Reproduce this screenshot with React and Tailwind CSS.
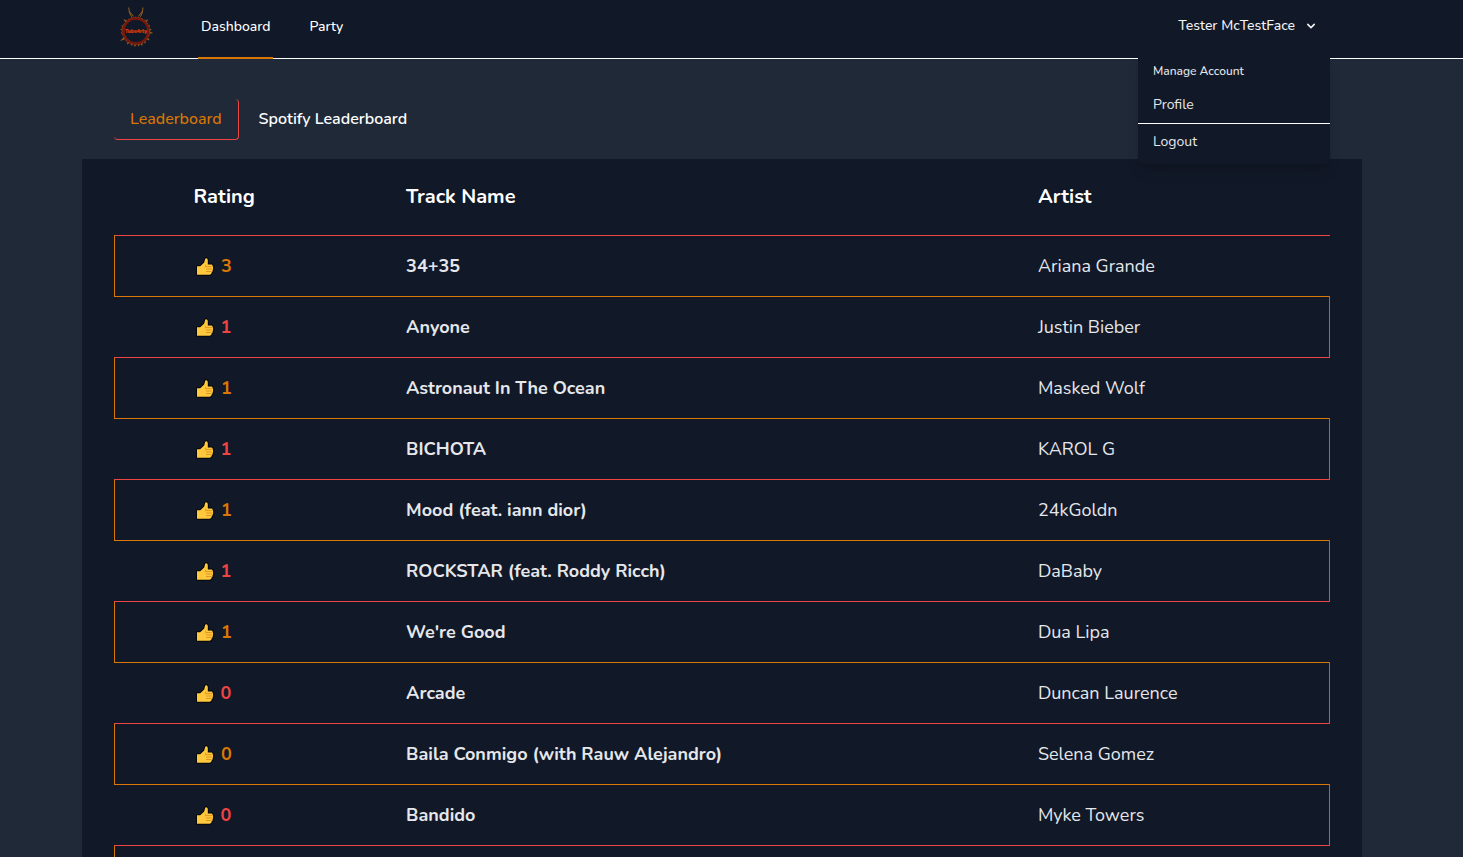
import React, { useState } from "react";

const tracks = [
  { rating: 3, name: "34+35", artist: "Ariana Grande" },
  { rating: 1, name: "Anyone", artist: "Justin Bieber" },
  { rating: 1, name: "Astronaut In The Ocean", artist: "Masked Wolf" },
  { rating: 1, name: "BICHOTA", artist: "KAROL G" },
  { rating: 1, name: "Mood (feat. iann dior)", artist: "24kGoldn" },
  { rating: 1, name: "ROCKSTAR (feat. Roddy Ricch)", artist: "DaBaby" },
  { rating: 1, name: "We're Good", artist: "Dua Lipa" },
  { rating: 0, name: "Arcade", artist: "Duncan Laurence" },
  { rating: 0, name: "Baila Conmigo (with Rauw Alejandro)", artist: "Selena Gomez" },
  { rating: 0, name: "Bandido", artist: "Myke Towers" },
];

// Angle and tip height of each spike around the logo's ring.
const spikes = [
  [46, 8.5], [68, 10], [84, 9.5], [97, 8.2], [124, 8.6], [142, 9.6], [157, 9],
  [170, 9.4], [184, 9.2], [198, 9.6], [214, 9], [238, 6.8], [262, 9.8],
  [276, 9.4], [290, 9.6], [314, 8],
];

function Logo() {
  return (
    <svg viewBox="0 0 36 42" className="h-[42px] w-9" aria-hidden="true">
      <path d="M10.7 1.5 L11.6 7 L13.6 10.8 M11 5 L15.5 10.4" stroke="#96601f" strokeWidth="1" fill="none" />
      <path d="M25 1.5 L24.2 7 L22.4 10.8 M24.6 5 L20.4 10.4" stroke="#96601f" strokeWidth="1" fill="none" />
      {spikes.map(([angle, tip]) => (
        <path
          key={angle}
          d={`M17 11.6 L18 ${tip} L19 11.6 Z`}
          fill="#a8702a"
          stroke="#8a5a20"
          strokeWidth="0.3"
          transform={`rotate(${angle} 18 25)`}
        />
      ))}
      <circle cx="18" cy="25" r="12.8" fill="none" stroke="#6b1a10" strokeWidth="2.6" />
      <circle cx="18" cy="25" r="13.8" fill="none" stroke="#9a4418" strokeWidth="0.8" strokeDasharray="2 1.5" />
      <circle cx="18" cy="25" r="11.8" fill="none" stroke="#931508" strokeWidth="0.7" />
      <text
        x="18"
        y="27"
        textAnchor="middle"
        fontSize="5"
        fontWeight="900"
        fill="#d2380a"
        stroke="#d2380a"
        strokeWidth="0.2"
        className="font-['Nunito',sans-serif]"
      >
        Tube4rty
      </text>
    </svg>
  );
}

function ThumbsUp() {
  return (
    <svg viewBox="0 0 20 20" className="mt-[3px] h-5 w-5" aria-hidden="true">
      <path
        d="M2 9.3 H5.2 L9.2 5.6 L10.2 1.8 Q10.6 1 11.5 1.2 Q12.8 1.6 12.8 3.2 V7.6 H16.6 Q17.8 7.8 17.6 9 Q18.6 9.8 18 11 Q18.6 12.4 17.6 13.2 Q18 14.6 16.8 15.2 Q16.6 17.6 14.6 17.7 H2 Z"
        fill="#ffc83d"
        stroke="#05070b"
        strokeWidth="2"
        strokeLinejoin="round"
        paintOrder="stroke"
      />
      <path
        d="M11 9.6 H17.2 M11 12 H17.4 M11 14.5 H16.6 M10.6 7.8 Q11 9.6 10 10.4"
        stroke="#d9911f"
        strokeWidth="0.9"
        fill="none"
      />
    </svg>
  );
}

function UserMenu() {
  const [open, setOpen] = useState(true);
  return (
    <div className="relative flex h-full items-center">
      <button
        type="button"
        aria-expanded={open}
        onClick={() => setOpen(!open)}
        className="mb-[6px] mr-[11px] flex items-center text-sm font-medium text-gray-100"
      >
        Tester McTestFace
        <svg viewBox="0 0 20 20" fill="currentColor" className="ml-2 h-4 w-4" aria-hidden="true">
          <path
            fillRule="evenodd"
            clipRule="evenodd"
            d="M5.293 7.293a1 1 0 011.414 0L10 10.586l3.293-3.293a1 1 0 111.414 1.414l-4 4a1 1 0 01-1.414 0l-4-4a1 1 0 010-1.414z"
          />
        </svg>
      </button>
      {open && (
        <div className="absolute right-0 top-12 z-10 w-48 rounded-md bg-[#111827] py-1 text-[#e5e7eb] shadow-lg">
          <div className="px-[15px] pb-2 pt-[11px] text-xs font-medium">Manage Account</div>
          <a href="#profile" className="block px-[15px] py-2 text-sm leading-5">
            Profile
          </a>
          <div className="border-t border-white" />
          <a href="#logout" className="block px-[15px] py-2 text-sm leading-5">
            Logout
          </a>
        </div>
      )}
    </div>
  );
}

export default function App() {
  return (
    <div className="h-screen overflow-hidden bg-[#1f2937] font-['Nunito',sans-serif] text-white">
      <header className="border-b border-white bg-[#111827] pr-[19px]">
        <div className="mx-auto flex h-[58px] max-w-7xl items-center justify-between px-8">
          <div className="flex h-full items-center">
            <a href="#home" aria-label="Home" className="mb-1 ml-1">
              <Logo />
            </a>
            <nav className="ml-11 flex h-full gap-8">
              <a
                href="#dashboard"
                className="-mb-px flex items-center border-b-2 border-[#d97706] px-[3px] pb-1 text-sm font-medium"
              >
                Dashboard
              </a>
              <a
                href="#party"
                className="-mb-px flex items-center border-b-2 border-transparent px-1 pb-1 text-sm font-medium"
              >
                Party
              </a>
            </nav>
          </div>
          <UserMenu />
        </div>
      </header>

      <main className="pr-[19px]">
        <div className="mx-auto max-w-7xl">
          <div className="flex gap-1 px-8 pb-[19px] pt-10">
            <button
              type="button"
              className="rounded border-b border-r border-[#ef4444] px-4 py-2 font-medium text-[#d97706]"
            >
              Leaderboard
            </button>
            <button type="button" className="px-4 pb-[9px] pt-2 font-semibold">
              Spotify Leaderboard
            </button>
          </div>

          <section className="bg-[#111827] px-8">
            <table className="w-full table-fixed border-collapse text-left">
              <thead>
                <tr className="h-[76px] align-top text-xl font-bold">
                  <th className="w-[24%] pl-[79px] pt-6">Rating</th>
                  <th className="w-[52%] pt-6">Track Name</th>
                  <th className="w-[24%] pt-6">Artist</th>
                </tr>
              </thead>
              <tbody className="text-lg text-[#e5e7eb]">
                {tracks.map((track, i) => (
                  <tr
                    key={track.name}
                    className={
                      i % 2 === 0
                        ? "h-[61px] border-l border-t border-l-[#d97706] border-t-[#ef4444]"
                        : "h-[61px] border-r border-t border-r-[#ef4444] border-t-[#d97706]"
                    }
                  >
                    <td className="pl-20">
                      <span
                        className={
                          i % 2 === 0
                            ? "flex items-center gap-[6px] font-bold text-[#d97706]"
                            : "flex items-center gap-[6px] font-bold text-[#ef4444]"
                        }
                      >
                        <ThumbsUp />
                        {track.rating}
                      </span>
                    </td>
                    <td className="font-bold">{track.name}</td>
                    <td>{track.artist}</td>
                  </tr>
                ))}
                <tr className="h-[61px] border-l border-t border-l-[#d97706] border-t-[#ef4444]">
                  <td colSpan={3} />
                </tr>
              </tbody>
            </table>
          </section>
        </div>
      </main>
    </div>
  );
}
